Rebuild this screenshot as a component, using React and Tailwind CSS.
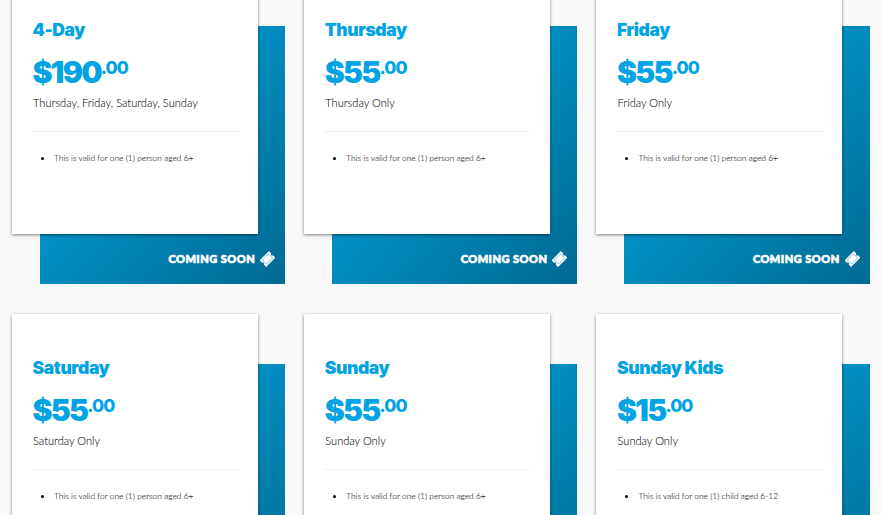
const tickets = [
  { name: '4-Day', dollars: '$190', days: 'Thursday, Friday, Saturday, Sunday', note: 'This is valid for one (1) person aged 6+' },
  { name: 'Thursday', dollars: '$55', days: 'Thursday Only', note: 'This is valid for one (1) person aged 6+' },
  { name: 'Friday', dollars: '$55', days: 'Friday Only', note: 'This is valid for one (1) person aged 6+' },
  { name: 'Saturday', dollars: '$55', days: 'Saturday Only', note: 'This is valid for one (1) person aged 6+' },
  { name: 'Sunday', dollars: '$55', days: 'Sunday Only', note: 'This is valid for one (1) person aged 6+' },
  { name: 'Sunday Kids', dollars: '$15', days: 'Sunday Only', note: 'This is valid for one (1) child aged 6-12' },
];

function TicketIcon() {
  return (
    <svg width="15" height="16" viewBox="0 0 15 16" fill="none">
      <g transform="rotate(-45 7.5 8)">
        <path d="M.9 3.4h13.2v3.4a1.2 1.2 0 0 0 0 2.4v3.4H.9V9.2a1.2 1.2 0 0 0 0-2.4z" fill="#fff" />
        <rect x="3.2" y="5" width="8.6" height="6" stroke="#4aa3c6" strokeWidth="0.6" />
      </g>
    </svg>
  );
}

function TicketCard({ ticket, showFooter }) {
  return (
    <article className="grid h-[308px]">
      <div className="col-start-1 row-start-1 mt-[50px] ml-[27.8px] flex items-end justify-end bg-gradient-to-br from-[#00aeea] to-[#006a92] pr-[10px] pb-[17px]">
        {showFooter && (
          <div className="flex h-4 items-center gap-[5px] text-white">
            <span className="font-['Lato',sans-serif] text-[11px] leading-4 font-black tracking-[0.5px] whitespace-nowrap [-webkit-text-stroke:0.7px_#fff]">
              COMING SOON
            </span>
            <TicketIcon />
          </div>
        )}
      </div>
      <div className="z-10 col-start-1 row-start-1 mr-[27.4px] mb-[50px] bg-white pt-[42px] pr-5 pl-[21px] shadow-[0_1px_3px_rgba(0,0,0,0.5)]">
        <h2 className="-ml-[0.5px] font-['Inter',sans-serif] text-[17.5px] leading-6 font-black tracking-[-0.4px] text-[#00a3e4]">{ticket.name}</h2>
        <p className="mt-[13px] -ml-[0.5px] flex h-9 items-start font-['Inter',sans-serif] text-[#00a3e4]">
          <span className="text-[30px] leading-[35px] font-black tracking-[-1.7px]">{ticket.dollars}</span>
          <span className="text-[17.5px] leading-[26px] font-extrabold tracking-[-0.9px]">.00</span>
        </p>
        <p className="mt-[3px] font-['Lato',sans-serif] text-[11.1px] leading-[17px] font-light whitespace-nowrap text-black [-webkit-text-stroke:0.05px_#222]">{ticket.days}</p>
        <hr className="mt-5 border-[#eee]" />
        <ul className="mt-[18px] list-disc pl-[21px] font-['Lato',sans-serif] text-[8.4px] leading-[15px] font-light text-black [-webkit-text-stroke:0.05px_#222] marker:text-[10px] marker:text-black">
          <li className="whitespace-nowrap">{ticket.note}</li>
        </ul>
      </div>
    </article>
  );
}

export default function App() {
  return (
    <main className="h-[515px] w-[881px] overflow-hidden bg-[#f9f9f9]">
      <div className="-mt-6 ml-3 grid w-[857.7px] grid-cols-3 gap-x-[19.05px] gap-y-[30px]">
        {tickets.map((ticket, i) => (
          <TicketCard key={ticket.name} ticket={ticket} showFooter={i < 3} />
        ))}
      </div>
    </main>
  );
}
